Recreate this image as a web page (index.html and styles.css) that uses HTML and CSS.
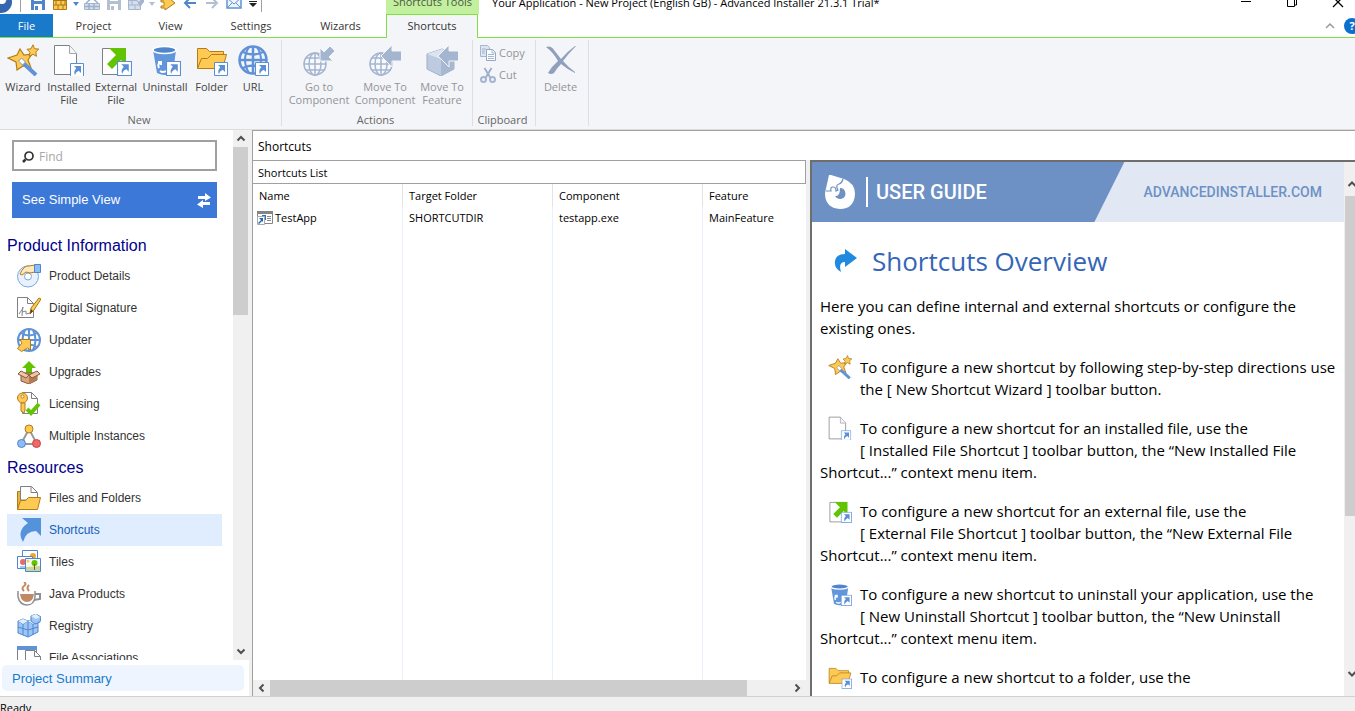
FILE: index.html
```html
<!DOCTYPE html>
<html lang="en-GB">
<head>
<meta charset="utf-8">
<title>Your Application - New Project (English GB) - Advanced Installer 21.3.1 Trial*</title>
<link rel="stylesheet" href="styles.css">
</head>
<body>
<svg class="defs" aria-hidden="true">
  <symbol id="overlay" viewBox="0 0 14 14"><path d="M.5.5h13v13H.5z" fill="#fff" stroke="#5a8fd6"/><path d="M4 3h7v7L8.700 7.700Q5.500 9 5 12 3 9 6.300 5.300z" fill="#5a8fd6"/></symbol>
  <symbol id="wizard" viewBox="0 0 32 32"><path d="M13 5l4 6 8-1-4 6 3 8-8-2-6 4-1-8-8-4 9-3z" fill="#ffca54" stroke="#b27d19" stroke-width="1.200"/><path d="M26 .8l1.500 4 4.300.2-3 3 .7 4.300-3.500-2-4 2 1-4-3-3 4-.5z" fill="#ffca54" stroke="#b27d19"/><path d="M15 18l14 13" stroke="#5f92d6" stroke-width="4"/><path d="M13 16l4 3.500" stroke="#fff" stroke-width="4"/><path d="M11.500 17l3-3 4 4-3 3z" fill="none" stroke="#8a9cb8"/></symbol>
  <symbol id="installed" viewBox="0 0 32 32"><path d="M1.500 1.500h15l7 8v21h-22z" fill="#fff" stroke="#7f8083"/><path d="M16.500 1.500v8h7" fill="#f4f5f8" stroke="#a5a6aa"/><use href="#overlay" x="17" y="19" width="14" height="14"/></symbol>
  <symbol id="external" viewBox="0 0 32 32"><path d="M2.500 4.500h21v26h-21z" fill="#fff" stroke="#7f8083"/><path d="M9 4h17v17l-5-5L12 25l-5-5 9-9z" fill="#62c400"/><use href="#overlay" x="17" y="17" width="15" height="15"/></symbol>
  <symbol id="uninstall" viewBox="0 0 32 32"><path d="M4 6l4 23q8 4 16 0l3-23z" fill="#6196dc"/><ellipse cx="15.500" cy="6" rx="11.500" ry="3.500" fill="#5085cc" stroke="#fff" stroke-width="1.500"/><path d="M10 24q-2-4 2-6m-3 0h3v3m-1 6q3 2 6 0" fill="none" stroke="#fff" stroke-width="2"/><use href="#overlay" x="17" y="17" width="15" height="15"/></symbol>
  <symbol id="folder" viewBox="0 0 32 32"><path d="M1.500 24.500v-20h9l3 3h14v5" fill="#ffca54" stroke="#b27d19"/><path d="M1.500 24.500l4-10h6l4-4h15l-4 14z" fill="#ffca54" stroke="#b27d19"/><use href="#overlay" x="18" y="18" width="14" height="14"/></symbol>
  <symbol id="globe" viewBox="0 0 32 32"><g fill="none" stroke="#5f92d6" stroke-width="2.500"><circle cx="16" cy="16" r="13.500"/><path d="M16 2v28M3 16h27M6 8q10 5 20 0M6 24q10-5 20 0"/><path d="M12 3q-8 13 0 26M20 3q8 13 0 26" stroke-width="2"/></g></symbol>
  <symbol id="url" viewBox="0 0 32 32"><use href="#globe"/><use href="#overlay" x="18" y="18" width="14" height="14"/></symbol>
  <symbol id="gglobe" viewBox="0 0 32 32"><g fill="#f7f9fc" stroke="#a4b5d0" stroke-width="1.500"><circle cx="12" cy="20" r="11"/><ellipse cx="12" cy="20" rx="6" ry="11"/><path d="M12 9v22M1 20h22M3 14h19M3 26h19"/></g></symbol>
  <symbol id="goto" viewBox="0 0 32 32"><use href="#gglobe"/><path d="M17 4v13h13l-4-4 6-6-5-5-6 6z" fill="#a4b5d0" stroke="#f4f5f8"/></symbol>
  <symbol id="movecomp" viewBox="0 0 32 32"><use href="#gglobe"/><path d="M12 12L23 1v6h10v10H23v6z" fill="#a4b5d0" stroke="#f4f5f8"/></symbol>
  <symbol id="movefeat" viewBox="0 0 32 32"><path d="M1 10l15-5 12 5v15l-13 7-14-7z" fill="#bdcadf" stroke="#9db0cd"/><path d="M1 10l14 5 13-5-12-5z" fill="#dce4ef"/><path d="M15 15l13-5v15l-13 7z" fill="#a8b8d1"/><path d="M12 12L23 1v6h10v10H23v6z" fill="#a4b5d0" stroke="#f4f5f8"/></symbol>
  <symbol id="delete" viewBox="0 0 32 32"><path d="M1 3q5-2 8 3l7 9q7-8 14-13h1Q23 10 18 17q6 7 12 11v1q-8-4-14-9-4 4-7 9-3 2-6 0 4-7 10-12Q8 8 1 3z" fill="#8f9fbc"/></symbol>
  <symbol id="copy" viewBox="0 0 16 16"><path d="M.5.500h7l2 2v9h-9z" fill="#dce5f0" stroke="#a7b7d1"/><path d="M6.500 4.500h6l3 3v8h-9z" fill="#fff" stroke="#93a6c6"/><path d="M12 5v3h3M8 9.500h6M8 11.500h6M8 13.500h6M2 4h4M2 6h3M2 8h3" fill="none" stroke="#a4b5d0"/></symbol>
  <symbol id="cut" viewBox="0 0 16 16"><path d="M4.500 1l6 10M11.500 1l-6 10" stroke="#9db0cd" stroke-width="2" fill="none"/><circle cx="3.500" cy="12.500" r="2.500" fill="none" stroke="#a4b5d0" stroke-width="2"/><circle cx="12.500" cy="12.500" r="2.500" fill="none" stroke="#a4b5d0" stroke-width="2"/></symbol>

  <symbol id="save" viewBox="0 0 16 16"><path d="M1 0h14v15H1z" fill="currentColor"/><path d="M4 0h8v6H4zM4 9h8v6H4z" fill="#fff"/><path d="M5 11h3v4H5z" fill="currentColor"/></symbol>
  <symbol id="bricks" viewBox="0 0 16 16"><path d="M1.500 1.500h13v13h-13z" fill="#ffca54" stroke="#b27d19"/><path d="M1 5.500h14M1 10h14M6 1v4M11 1v4M4 5v5M9 5v5M13 5v5M6 10v4M11 10v4" stroke="#a87614"/></symbol>
  <symbol id="gbricks" viewBox="0 0 16 16"><path d="M.5 8.500h15v6H.500z" fill="#d6deea" stroke="#a4b5d0"/><path d="M1 11.500h14M5 9v6M10 9v6M2 8l6-5 6 5" fill="none" stroke="#9db0cd" stroke-width="1.500"/></symbol>
  <symbol id="clean" viewBox="0 0 16 16"><path d="M.5.500h12v14H.5z" fill="#d6deea" stroke="#a4b5d0"/><path d="M1 5.500h8M1 10h11M5 1v4M4 6v4M7 10v4" stroke="#a4b5d0"/><path d="M8 4l3 3 5-6v6l-4 5z" fill="#a4b5d0"/></symbol>
  <symbol id="run" viewBox="0 0 16 16"><path d="M4 0v5H1v2h3v4H1v2h4v2L15 8 5 0z" fill="#ffca54" stroke="#b27d19"/></symbol>
  <symbol id="back" viewBox="0 0 16 16"><path d="M14 8H3M8 3L3 8l5 5" fill="none" stroke="currentColor" stroke-width="2"/></symbol>
  <symbol id="fwd" viewBox="0 0 16 16"><path d="M2 8h11M8 3l5 5-5 5" fill="none" stroke="currentColor" stroke-width="2"/></symbol>
  <symbol id="mail" viewBox="0 0 16 16"><path d="M1 2h14v11H1z" fill="#eef4fc" stroke="#5f92d6" stroke-width="1.500"/><path d="M1 3l7 6 7-6M1 13l5-5M15 13l-5-5" fill="none" stroke="#5f92d6"/></symbol>
  <symbol id="caret" viewBox="0 0 8 8"><path d="M1 3h6L4 7z" fill="currentColor"/></symbol>
  <symbol id="custom" viewBox="0 0 8 10"><path d="M0 3h8v1H0zM0 5h8L4 9z" fill="#222"/></symbol>

  <symbol id="details" viewBox="0 0 24 24"><circle cx="11" cy="12.500" r="10.500" fill="#e8f2fd" stroke="#7ba7de"/><circle cx="11" cy="12.500" r="3.500" fill="#fff" stroke="#7ba7de"/><path d="M3 10Q7 1 12 2l6-1v7l-5 1-4-1-4 3z" fill="#ffe9bd" stroke="#b27d19"/><path d="M17.500.5h6v8h-6z" fill="#8dbdf4" stroke="#5085cc"/></symbol>
  <symbol id="signature" viewBox="0 0 24 24"><path d="M.5 1.500h10l6 6v14H.5z" fill="#fff" stroke="#7f8083"/><path d="M10.500 1.500v6h6" fill="none" stroke="#7f8083"/><path d="M2 18q4-5 4-7-1 5-1 9M5 16l4-1v3l4-1" fill="none" stroke="#888"/><path d="M22 2l2 1-7 11-4 4 1-6z" fill="#ffca54" stroke="#a87614"/><path d="M13 18l1-5 2 2z" fill="#6b3a10"/></symbol>
  <symbol id="updater" viewBox="0 0 24 24"><g fill="none" stroke="#5f92d6" stroke-width="2"><circle cx="12" cy="12" r="11"/><path d="M12 1v22M1 12h22M4 5q8 5 16 0M4 19q8-5 16 0M8 2q-5 10 0 20M16 2q5 10 0 20"/></g><path d="M3 11.500h10.500V22l-3-2-6 3.500-4-3L5 15z" fill="#ffca54" stroke="#b27d19"/></symbol>
  <symbol id="upgrades" viewBox="0 0 24 24"><path d="M12 1l7 7h-4v5H9V8H5z" fill="#62c400"/><path d="M4 13h16v7l-8 4-8-3z" fill="#d9a47c" stroke="#8a5a3a"/><path d="M12 15v9l8-4v-7z" fill="#b57a52"/><path d="M4 11l8 4-3 3-8-4zM20 11l-8 4 3 3 8-4z" fill="#edc7a8" stroke="#8a5a3a"/></symbol>
  <symbol id="licensing" viewBox="0 0 24 24"><path d="M5.500.5h9l6 6v15h-15z" fill="#fff" stroke="#7f8083"/><path d="M14.500.5v6h6" fill="none" stroke="#7f8083"/><circle cx="5.500" cy="6" r="5" fill="#ffca54" stroke="#b27d19"/><path d="M4 11h4v7l-1 3-3-2z" fill="#ffca54" stroke="#b27d19"/><circle cx="5.500" cy="4.500" r="1.500" fill="#fff" stroke="#b27d19"/><path d="M10 17l4 4 8-9" fill="none" stroke="#62c400" stroke-width="4"/></symbol>
  <symbol id="instances" viewBox="0 0 24 24"><path d="M12 5L4 20h16z" fill="none" stroke="#999" stroke-width="2"/><circle cx="12" cy="5" r="4" fill="#ffca54" stroke="#b27d19"/><circle cx="4.500" cy="19.500" r="4" fill="#8dbdf4" stroke="#5085cc"/><circle cx="19.500" cy="19.500" r="4" fill="#ee6a6a" stroke="#c44"/></symbol>
  <symbol id="files" viewBox="0 0 24 24"><path d="M.5 23.500v-18h5v6h14v12z" fill="#e9b23a" stroke="#b27d19"/><path d="M3.500 14V.5h11l6 6V14z" fill="#fff" stroke="#7f8083"/><path d="M14 .5v6h6" fill="none" stroke="#7f8083"/><path d="M.5 23.500l3-9h5l3-3h12l-3 12z" fill="#ffca54" stroke="#b27d19"/></symbol>
  <symbol id="shortcut" viewBox="0 0 24 24"><path d="M5 0h19v18l-5-5Q9 13 6 24-1 13 11 5z" fill="#5492da"/></symbol>
  <symbol id="tiles" viewBox="0 0 24 24"><path d="M5.500.5h15v12h-15z" fill="#fff" stroke="#5085cc"/><circle cx="16" cy="6" r="3" fill="#f0a830"/><path d="M.5 6.500h15v12H.5z" fill="#fff" stroke="#5085cc"/><circle cx="6" cy="12" r="3" fill="#e86a6a"/><path d="M3 16h7v2H3z" fill="#9cc6f5"/><path d="M8.500 8.500h15v13h-15z" fill="#f7fbf2" stroke="#5085cc"/><path d="M9 17l14-1v5H9z" fill="#c7d99a"/><circle cx="11" cy="11" r="1.500" fill="#ffca54"/><circle cx="17.500" cy="13" r="3" fill="#62c400"/><path d="M17.500 14v6" stroke="#7a5a20"/></symbol>
  <symbol id="java" viewBox="0 0 24 24"><path d="M17 12h6v5l-6 1" fill="none" stroke="#8d8f94" stroke-width="2"/><path d="M1 9v6q2 8 9 8t8-8V9" fill="#fff" stroke="#8d8f94" stroke-width="1.500"/><path d="M3 12h14q-1 8-7 8t-7-8z" fill="#c08a66"/><path d="M7 9Q4 6 7 4T7 0M12 9q-3-3 0-6" fill="none" stroke="#c08a66" stroke-width="2"/></symbol>
  <symbol id="registry" viewBox="0 0 24 24"><path d="M1 7l5-2 5 2 6-2 4 3v10l-10 5-10-4z" fill="#9cc6f5" stroke="#5085cc"/><path d="M1 7l5 3 5-3 5 3 5-2M1 13l10 3 10-3M6 10v11M11 7v16M16 10v11" fill="none" stroke="#5085cc"/><path d="M1 7l5-2 5 2-5 3zM11 7l5-2 5 3-5 2z" fill="#e1effd"/><path d="M14 2l5-2 5 3-1 5-5 2-4-3z" fill="#9cc6f5" stroke="#5085cc"/><path d="M14 2l5-2 4 3-4 2z" fill="#e1effd"/></symbol>
  <symbol id="assoc" viewBox="0 0 24 24"><path d="M.5 1.500h19v20H.5z" fill="#fff" stroke="#7f8083"/><path d="M0 0h20v4H0z" fill="#5f92d6"/><path d="M8.500 4.500h9l6 6v12h-15z" fill="#fff" stroke="#7f8083"/><path d="M17.500 4.500v6h6" fill="none" stroke="#7f8083"/></symbol>
  <symbol id="up" viewBox="0 0 16 16"><path d="M4.500 10L8 6.500l3.500 3.500" fill="none" stroke="#505050" stroke-width="2"/></symbol>
  <symbol id="down" viewBox="0 0 16 16"><path d="M4.500 6L8 9.500 11.500 6" fill="none" stroke="#505050" stroke-width="2"/></symbol>
  <symbol id="left" viewBox="0 0 16 16"><path d="M10 4.500L6.500 8l3.500 3.500" fill="none" stroke="#505050" stroke-width="2"/></symbol>
  <symbol id="right" viewBox="0 0 16 16"><path d="M6 4.500L9.500 8 6 11.500" fill="none" stroke="#505050" stroke-width="2"/></symbol>
</svg>

<header class="titlebar">
  <div class="quick">
    <svg class="logo" viewBox="0 0 12 24"><circle cx="1" cy="11" r="11" fill="#3465b0"/><circle cx="2" cy="9" r="4" fill="#fff"/><path d="M0 0h7v10l-3-2-4 1z" fill="#f08030"/></svg>
    <span class="sep"></span>
    <button class="qbtn blue" aria-label="Save"><svg><use href="#save"/></svg></button>
    <button class="qbtn" aria-label="Build"><svg><use href="#bricks"/></svg></button>
    <button class="qcaret blue" aria-label="Build options"><svg><use href="#caret"/></svg></button>
    <button class="qbtn" aria-label="Rebuild" disabled><svg><use href="#gbricks"/></svg></button>
    <button class="qbtn gray" aria-label="Save all" disabled><svg><use href="#save"/></svg></button>
    <button class="qbtn" aria-label="Clean" disabled><svg><use href="#clean"/></svg></button>
    <button class="qcaret gray" aria-label="Clean options" disabled><svg><use href="#caret"/></svg></button>
    <button class="qbtn" aria-label="Run"><svg><use href="#run"/></svg></button>
    <button class="qbtn blue" aria-label="Back"><svg><use href="#back"/></svg></button>
    <button class="qbtn gray" aria-label="Forward" disabled><svg><use href="#fwd"/></svg></button>
    <button class="qbtn" aria-label="Mail"><svg><use href="#mail"/></svg></button>
    <button class="qcaret wide" aria-label="Customise"><svg><use href="#custom"/></svg></button>
    <span class="sep"></span>
  </div>
  <div class="context">Shortcuts Tools</div>
  <div class="apptitle">Your Application - New Project (English GB) - Advanced Installer 21.3.1 Trial*</div>
  <div class="winbtns">
    <button aria-label="Minimise"><svg viewBox="0 0 12 12"><path d="M1 4.500h10" stroke="#000"/></svg></button>
    <button aria-label="Restore"><svg viewBox="0 0 12 12"><path d="M1.500 2.500h7v7h-7zM3 .5h7.500V8H9" fill="none" stroke="#000"/></svg></button>
    <button aria-label="Close"><svg viewBox="0 0 12 12"><path d="M1 0l10 10M11 0L1 10" stroke="#000" stroke-width="1.300"/></svg></button>
  </div>
</header>

<nav class="tabs">
  <button class="tab file">File</button>
  <button class="tab project">Project</button>
  <button class="tab view">View</button>
  <button class="tab settings">Settings</button>
  <button class="tab wizards">Wizards</button>
  <button class="tab active">Shortcuts</button>
  <div class="help">
    <svg class="fold" viewBox="0 0 10 10"><path d="M1 7l4-4 4 4" fill="none" stroke="#999" stroke-width="1.500"/></svg>
    <button aria-label="Help">?</button>
  </div>
</nav>

<section class="ribbon">
  <div class="group">
    <div class="cmds new">
      <button class="cmd"><svg><use href="#wizard"/></svg>Wizard</button>
      <button class="cmd"><svg><use href="#installed"/></svg>Installed<br>File</button>
      <button class="cmd"><svg><use href="#external"/></svg>External<br>File</button>
      <button class="cmd"><svg><use href="#uninstall"/></svg>Uninstall</button>
      <button class="cmd"><svg><use href="#folder"/></svg>Folder</button>
      <button class="cmd"><svg><use href="#url"/></svg>URL</button>
    </div>
    <div class="gname">New</div>
  </div>
  <div class="group">
    <div class="cmds actions">
      <button class="cmd" disabled><svg><use href="#goto"/></svg>Go to<br>Component</button>
      <button class="cmd" disabled><svg><use href="#movecomp"/></svg>Move To<br>Component</button>
      <button class="cmd" disabled><svg><use href="#movefeat"/></svg>Move To<br>Feature</button>
    </div>
    <div class="gname">Actions</div>
  </div>
  <div class="group clip">
    <div class="small">
      <button disabled><svg><use href="#copy"/></svg>Copy</button>
      <button disabled><svg><use href="#cut"/></svg>Cut</button>
    </div>
    <div class="gname">Clipboard</div>
  </div>
  <div class="group">
    <div class="cmds single">
      <button class="cmd" disabled><svg><use href="#delete"/></svg>Delete</button>
    </div>
  </div>
</section>

<div class="body">
  <aside class="side">
    <div class="sidetop">
      <div class="sidelist">
        <div class="find">
          <label for="find"><svg viewBox="0 0 14 14"><circle cx="8" cy="6" r="4" fill="none" stroke="#333" stroke-width="1.700"/><path d="M4.500 9.500L2 12" stroke="#333" stroke-width="2.500"/></svg></label>
          <input id="find" type="text" placeholder="Find" aria-label="Find">
        </div>
        <button class="simple">See Simple View<svg viewBox="0 0 16 16"><path d="M2 4h7V1l6 4.500L9 9V7H2zM14 10H7V8l-6 4.500L7 16v-3h7z" fill="#fff"/></svg></button>
        <h2>Product Information</h2>
        <a href="#"><svg><use href="#details"/></svg>Product Details</a>
        <a href="#"><svg><use href="#signature"/></svg>Digital Signature</a>
        <a href="#"><svg><use href="#updater"/></svg>Updater</a>
        <a href="#"><svg><use href="#upgrades"/></svg>Upgrades</a>
        <a href="#"><svg><use href="#licensing"/></svg>Licensing</a>
        <a href="#"><svg><use href="#instances"/></svg>Multiple Instances</a>
        <h2>Resources</h2>
        <a href="#"><svg><use href="#files"/></svg>Files and Folders</a>
        <a href="#" class="current"><svg><use href="#shortcut"/></svg>Shortcuts</a>
        <a href="#"><svg><use href="#tiles"/></svg>Tiles</a>
        <a href="#"><svg><use href="#java"/></svg>Java Products</a>
        <a href="#"><svg><use href="#registry"/></svg>Registry</a>
        <a href="#"><svg><use href="#assoc"/></svg>File Associations</a>
      </div>
      <div class="vbar">
        <svg><use href="#up"/></svg><div class="thumb"></div><div class="rest"></div><svg><use href="#down"/></svg>
      </div>
    </div>
    <a class="summary" href="#">Project Summary</a>
  </aside>

  <main class="main">
    <h1>Shortcuts</h1>
    <div class="split">
      <section class="list">
        <h2>Shortcuts List</h2>
        <div class="tablebox">
          <table>
            <colgroup><col class="c"><col class="c"><col class="c"><col></colgroup>
            <thead><tr><th>Name</th><th>Target Folder</th><th>Component</th><th>Feature</th></tr></thead>
            <tbody>
              <tr><td class="app"><span><svg viewBox="0 0 16 14"><path d="M.5.5h15v12H.5z" fill="#fff" stroke="#858585"/><path d="M0 0h16v3H0z" fill="#858585"/><path d="M10 5.500h4M10 7.500h4M10 9.500h4" stroke="#888"/><path d="M5 4h4v5H5z" fill="#1979ca"/><path d="M.5 5.500h7v8h-7z" fill="#fff" stroke="#aaa"/><path d="M2 7h4v4L5 10l-3 3-1-1 3-3z" fill="#2464b4"/></svg>TestApp</span></td><td>SHORTCUTDIR</td><td>testapp.exe</td><td>MainFeature</td></tr>
              <tr class="fill"><td></td><td></td><td></td><td></td></tr>
            </tbody>
          </table>
        </div>
        <div class="hbar"><svg><use href="#left"/></svg><div class="thumb"></div><div class="rest"></div><svg><use href="#right"/></svg></div>
      </section>
      <section class="guide">
        <div class="doc">
          <div class="banner">
            <svg class="mark" viewBox="0 0 32 34"><path d="M5 0l2 0 13 4Q31 8 31 19 30 34 16 34 1 33 1 18z" fill="#fff"/><path d="M16 13a5.500 5.500 0 1 1-5 8q5 1 5-8z" fill="#6d91c5"/><path d="M2 16h5q-1-4 2-4t3 4l2-1q-3-5 1-6 3-1 4-5" fill="none" stroke="#6d91c5" stroke-width="1.200"/></svg>
            <strong>USER GUIDE</strong>
            <a href="#">ADVANCEDINSTALLER.COM</a>
          </div>
          <h2><svg viewBox="0 0 24 26"><path d="M11 1l12 9-12 9v-5q-7 0-4 10Q0 20 1 13 2 6 11 6z" fill="#1f8ae0"/></svg>Shortcuts Overview</h2>
          <p>Here you can define internal and external shortcuts or configure the<br>existing ones.</p>
          <p><svg><use href="#wizard"/></svg>To configure a new shortcut by following step-by-step directions use<br>the [ New Shortcut Wizard ] toolbar button.</p>
          <p><svg><use href="#installed"/></svg>To configure a new shortcut for an installed file, use the<br>[ Installed File Shortcut ] toolbar button, the “New Installed File<br>Shortcut...” context menu item.</p>
          <p><svg><use href="#external"/></svg>To configure a new shortcut for an external file, use the<br>[ External File Shortcut ] toolbar button, the “New External File<br>Shortcut...” context menu item.</p>
          <p><svg><use href="#uninstall"/></svg>To configure a new shortcut to uninstall your application, use the<br>[ New Uninstall Shortcut ] toolbar button, the “New Uninstall<br>Shortcut...” context menu item.</p>
          <p><svg><use href="#folder"/></svg>To configure a new shortcut to a folder, use the</p>
        </div>
        <div class="gbar"><svg><use href="#up"/></svg><div class="thumb"></div><div class="rest"></div><svg><use href="#down"/></svg></div>
      </section>
    </div>
  </main>
</div>
<footer class="status">Ready</footer>
</body>
</html>
```
FILE: styles.css
```css
* { box-sizing: border-box; }
html, body { height: 100%; }
body {
  margin: 0;
  display: flex;
  flex-direction: column;
  overflow: hidden;
  background: #fff;
  color: #000;
  font: 11px/14px "Open Sans", "Noto Sans", sans-serif;
}
button { margin: 0; padding: 0; border: 0; background: none; font: inherit; color: inherit; }
a { text-decoration: none; color: inherit; }
h1, h2, p { margin: 0; font-weight: 400; }
svg { flex: none; }
.defs { position: absolute; width: 0; height: 0; }

.titlebar { flex: none; height: 14px; display: flex; align-items: flex-end; }
.titlebar > div { flex: none; height: 22px; display: flex; align-items: center; }
.quick { width: 386px; }
.logo { width: 12px; height: 24px; margin-right: 8px; }
.sep { width: 1px; height: 18px; background: #a0a0a0; }
.logo + .sep { margin-right: 6px; }
.qbtn { width: 22px; height: 16px; display: flex; justify-content: center; }
.qbtn svg { width: 16px; height: 16px; }
.qcaret { width: 10px; display: flex; justify-content: center; }
.qcaret svg { width: 8px; height: 10px; }
.wide { width: 16px; }
.blue { color: #5085cc; }
.gray { color: #b4c0d2; }
.titlebar .context { width: 93px; justify-content: center; padding-bottom: 2px; background: #c2f09e; color: #4d5a45; }
.apptitle { padding-left: 13px; white-space: nowrap; }
.titlebar .winbtns { margin-left: auto; padding-right: 11px; gap: 34px; }
.winbtns button { width: 12px; height: 12px; }
.winbtns svg { display: block; }

.tabs { flex: none; height: 24px; display: flex; border-bottom: 1px solid #80e040; color: #333; }
.tab { height: 23px; }
.file { width: 53px; background: #1979ca; color: #fff; }
.project { width: 81px; }
.view { width: 73px; }
.settings { width: 88px; }
.wizards { width: 91px; }
.active { position: relative; width: 92px; height: 24px; padding-bottom: 2px; border: 1px solid #80e040; border-bottom: 0; background: #f4f5f8; }
.help { margin-left: auto; width: 30px; display: flex; align-items: center; gap: 9px; overflow: hidden; }
.fold { width: 10px; height: 10px; }
.help button { flex: none; width: 16px; height: 16px; border-radius: 8px; background: #0b6fd0; color: #fff; font-weight: 700; }

.ribbon { flex: none; height: 92px; padding: 2px 0 3px; display: flex; background: #f4f5f8; border-bottom: 1px solid #dcdcdc; color: #444; }
.group { display: flex; flex-direction: column; justify-content: space-between; border-right: 1px solid #dddfe3; padding-top: 4px; }
.clip { padding-top: 2px; }
.cmds { display: grid; line-height: 13px; }
.new { grid-template-columns: 46px 46px 48px 50px 43px 40px; padding-right: 8px; }
.actions { grid-template-columns: 66px 66px 48px; padding: 0 6px 0 4px; }
.single { grid-template-columns: 49px; padding-right: 3px; }
.cmd { display: block; text-align: center; align-self: start; white-space: nowrap; }
.cmd svg { display: block; width: 32px; height: 32px; margin: 0 auto 4px; }
.ribbon button:disabled { color: #939498; }
.small { width: 62px; padding-left: 7px; }
.small button { height: 22px; display: flex; align-items: center; gap: 3px; }
.small svg { width: 16px; height: 16px; }
.gname { height: 14px; line-height: 14px; margin-bottom: -1px; padding-right: 3px; text-align: center; color: #666; }

.body { flex: 1; min-height: 0; display: flex; }
.side { flex: none; width: 252px; display: flex; flex-direction: column; border-right: 3px solid #f0f0f0; font-family: "Liberation Sans", Arial, sans-serif; font-size: 12px; }
.sidetop { flex: 1; min-height: 0; display: flex; }
.sidelist { flex: 1; overflow: hidden; padding: 10px 11px 0 7px; color: #333; }
.find { height: 31px; margin: 0 5px; padding: 2px 0 0 7px; display: flex; align-items: center; border: 2px solid #a0a0a0; }
.find svg { display: block; width: 14px; height: 14px; }
.find input { flex: 1; min-width: 0; border: 0; outline: 0; padding: 0 0 0 4px; background: none; font: 12px "Open Sans", sans-serif; }
.find input::placeholder { color: #a8a8a8; }
.simple { width: 205px; height: 36px; margin: 11px 5px 12px; padding: 0 5px 0 10px; display: flex; align-items: center; justify-content: space-between; background: #3c78d8; color: #fff; font-size: 13px; }
.simple svg { width: 16px; height: 16px; }
.sidelist h2 { height: 30px; line-height: 32px; font-size: 16px; color: #00008b; }
.sidelist a { height: 32px; padding-left: 10px; display: flex; align-items: center; gap: 8px; }
.sidelist a svg { width: 24px; height: 24px; }
.sidelist .current { background: #e0edff; color: #1060b8; }
.vbar { width: 16px; display: flex; flex-direction: column; background: #f0f0f0; }
.vbar svg { width: 16px; height: 17px; }
.vbar .thumb { flex: 168; background: #cdcdcd; margin-right: 1px; }
.vbar .rest { flex: 328; }
.summary { flex: none; height: 26px; margin: 5px 5px 5px 2px; padding-left: 10px; border-radius: 5px; background: #eef5fe; color: #1979ca; font-size: 13px; line-height: 28px; }

.main { flex: 1; min-width: 0; display: flex; flex-direction: column; border: 1px solid #a0a0a0; border-width: 1px 0 0 1px; font-size: 11px; }
.main h1 { height: 29px; padding-left: 5px; font-size: 12px; line-height: 31px; }
.split { flex: 1; min-height: 0; display: grid; grid-template-columns: 553fr 545fr; grid-template-rows: 100%; column-gap: 4px; background: #f0f0f0; }
.list { min-width: 0; display: flex; flex-direction: column; background: #fff; }
.list h2 { flex: none; height: 24px; padding-left: 5px; border: 1px solid #a0a0a0; border-left: 0; font-size: 11px; line-height: 24px; }
.tablebox { flex: 1; min-height: 0; }
table { width: 100%; height: 100%; table-layout: fixed; border-collapse: separate; border-spacing: 0; }
.c { width: 150px; }
th, td { height: 22px; padding: 0 0 0 6px; border-right: 1px solid #e8f1fc; text-align: left; font-weight: 400; white-space: nowrap; }
th { height: 23px; border-right-color: #e0e3e8; }
th:last-child, td:last-child { border-right: 0; }
.fill td { height: auto; }
.app { padding-left: 4px; }
.app span { display: flex; align-items: center; gap: 2px; }
.app svg { width: 16px; height: 14px; }
.hbar { flex: none; height: 16px; display: flex; background: #f0f0f0; }
.hbar svg { width: 17px; height: 16px; }
.hbar .thumb { flex: 477; background: #cdcdcd; }
.hbar .rest { flex: 42; }

.guide { min-width: 0; display: flex; border: 2px solid #6e6e6e; border-width: 2px 0 0 2px; background: #fff; }
.doc { flex: 1; min-width: 0; overflow: hidden; font-size: 15px; line-height: 22px; }
.banner { height: 60px; padding: 0 22px 0 12px; display: flex; align-items: center; background: linear-gradient(116.500deg, #6d91c5 0 279px, #e1e8f3 280px); font-family: Roboto, sans-serif; }
.mark { width: 32px; height: 34px; }
.banner strong { margin-left: 10px; padding-left: 8px; border-left: 2px solid #fff; color: #fff; font-size: 20px; line-height: 30px; font-weight: 500; }
.banner a { margin-left: auto; color: #6d91c5; font-size: 14px; font-weight: 500; }
.doc h2 { height: 73px; padding: 4px 0 0 22px; display: flex; align-items: center; gap: 14px; color: #3465b8; font-size: 26px; }
.doc h2 svg { width: 24px; height: 26px; }
.doc p { margin: 0 0 17px 8px; white-space: nowrap; }
.doc p svg { float: left; width: 24px; height: 24px; margin: -1px 8px 20px; }
.gbar { flex: none; width: 11px; overflow: hidden; display: flex; flex-direction: column; background: #f0f0f0; }
.gbar svg { width: 16px; height: 44px; }
.gbar .thumb { flex: 319; margin-left: 1px; background: #cdcdcd; }
.gbar .rest { flex: 136; }
.gbar svg:first-child { height: 24px; margin-top: 10px; }

.status { flex: none; height: 15px; padding-top: 4px; background: #f0f0f0; border-top: 1px solid #d0d0d0; white-space: nowrap; overflow: hidden; }
```
